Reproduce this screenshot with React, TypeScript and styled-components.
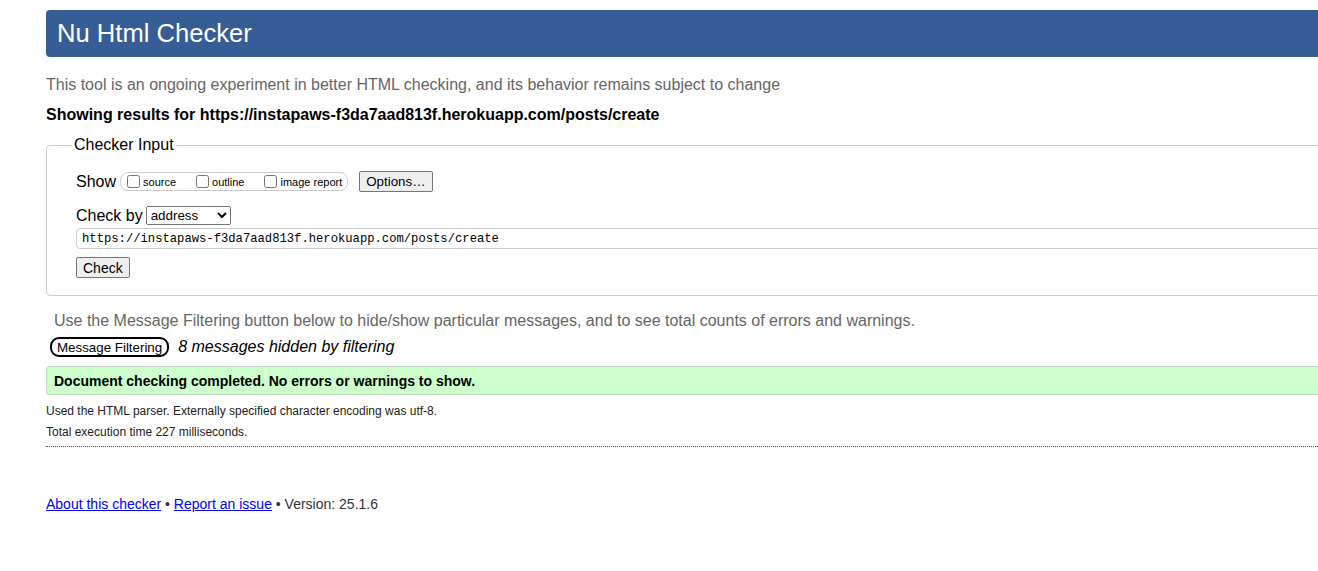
import React from 'react';
import styled, { createGlobalStyle } from 'styled-components';

const GlobalStyle = createGlobalStyle`
  html, body {
    margin: 0;
    padding: 0;
    background: #fff;
    overflow: hidden;
  }

  body {
    font-family: 'Liberation Sans', Arial, sans-serif;
    color: #000;
  }
`;

const Page = styled.div`
  width: 1500px;
  padding: 10px 0 0 46px;
  box-sizing: border-box;
  font-size: 16px;
  line-height: 18px;
`;

const Header = styled.h1`
  margin: 0;
  height: 47px;
  padding: 0 11px 2px;
  box-sizing: border-box;
  display: flex;
  align-items: center;
  background-color: #365d95;
  color: #fff;
  font-size: 25.6px;
  font-weight: normal;
  border-radius: 4px;
`;

const Intro = styled.p`
  margin: 19px 0 0;
  color: #666;
`;

const Results = styled.p`
  margin: 12px 0 0;
  font-weight: bold;
`;

const Fieldset = styled.fieldset`
  margin: 12px 0 0;
  padding: 17px 0 17px 29px;
  border: 1px solid #ccc;
  border-radius: 4px;
  min-width: 0;

  legend {
    margin-left: -4px;
    padding: 0 2px;
    font-size: 16px;
    line-height: 18px;
  }
`;

const Row = styled.div<{ $top?: number }>`
  display: flex;
  align-items: center;
  gap: 4px;
  height: 21px;
  margin-top: ${({ $top }) => $top ?? 0}px;
`;

const CheckGroup = styled.span`
  display: inline-flex;
  align-items: center;
  height: 17px;
  padding: 0 5px 0 4px;
  border: 1px solid #ccc;
  border-radius: 8px;
  margin-right: 7px;

  label {
    display: inline-flex;
    align-items: center;
    font-size: 11px;
    margin-right: 18px;

    &:last-child {
      margin-right: 0;
    }
  }

  input {
    width: 13px;
    height: 13px;
    margin: 0 3px 0 2px;
  }
`;

const NativeButton = styled.button<{ $size?: number }>`
  font-family: 'Liberation Sans', Arial, sans-serif;
  font-size: ${({ $size }) => $size ?? 13.33}px;
  height: 21px;
  padding: 0 6px;
  background: #efefef;
  color: #000;
  border: 1px solid #767676;
  border-radius: 2px;
`;

const Select = styled.select`
  font-family: 'Liberation Sans', Arial, sans-serif;
  font-size: 13.33px;
  width: 85px;
  height: 19px;
  margin-left: -1px;
`;

const UrlInput = styled.input`
  display: block;
  box-sizing: border-box;
  width: 100%;
  height: 21px;
  margin-top: 2px;
  padding: 0 5px;
  border: 1px solid #ccc;
  border-radius: 4px;
  font-family: 'Liberation Mono', Consolas, monospace;
  font-size: 12.2px;
  color: #000;
`;

const CheckButtonWrap = styled.div`
  margin-top: 8px;
`;

const FilterNote = styled.p`
  margin: 16px 0 0 8px;
  color: #666;
`;

const FilterRow = styled.div`
  display: flex;
  align-items: center;
  margin: 7px 0 0 4px;
  height: 20px;
  gap: 9px;

  em {
    font-style: italic;
  }
`;

const FilterButton = styled.button`
  font-family: 'Liberation Sans', Arial, sans-serif;
  font-size: 13.33px;
  height: 20px;
  padding: 0 5px;
  background: #fff;
  color: #000;
  border: 2px solid #000;
  border-radius: 9px;
`;

const Success = styled.div`
  margin-top: 9px;
  height: 29px;
  box-sizing: border-box;
  display: flex;
  align-items: center;
  padding-left: 7px;
  background-color: #ccffcc;
  border: 1px solid #c4d6c4;
  border-radius: 3px;
  font-size: 14px;
  font-weight: bold;
`;

const Small = styled.p<{ $top: number }>`
  margin: ${({ $top }) => $top}px 0 0;
  font-size: 12px;
  line-height: 14px;
  color: #222;
`;

const Divider = styled.hr`
  margin: 7px 0 0;
  border: 0;
  border-top: 1px dotted #555;
  height: 0;
`;

const Footer = styled.p`
  margin: 49px 0 0;
  font-size: 14px;
  line-height: 16px;
  color: #333;

  a {
    color: #0000ee;
    text-decoration: underline;
  }
`;

function App() {
  return (
    <Page>
      <GlobalStyle />
      <Header>Nu Html Checker</Header>
      <Intro>
        This tool is an ongoing experiment in better HTML checking, and its
        behavior remains subject to change
      </Intro>
      <Results>
        Showing results for https://instapaws-f3da7aad813f.herokuapp.com/posts/create
      </Results>

      <Fieldset>
        <legend>Checker Input</legend>
        <Row>
          <span>Show</span>
          <CheckGroup>
            <label>
              <input type="checkbox" readOnly />
              source
            </label>
            <label>
              <input type="checkbox" readOnly />
              outline
            </label>
            <label>
              <input type="checkbox" readOnly />
              image report
            </label>
          </CheckGroup>
          <NativeButton>Options…</NativeButton>
        </Row>
        <Row $top={13}>
          <span>Check by</span>
          <Select defaultValue="address">
            <option value="address">address</option>
            <option value="file">file upload</option>
            <option value="text">text input</option>
          </Select>
        </Row>
        <UrlInput
          readOnly
          value="https://instapaws-f3da7aad813f.herokuapp.com/posts/create"
        />
        <CheckButtonWrap>
          <NativeButton $size={14}>Check</NativeButton>
        </CheckButtonWrap>
      </Fieldset>

      <FilterNote>
        Use the Message Filtering button below to hide/show particular messages,
        and to see total counts of errors and warnings.
      </FilterNote>
      <FilterRow>
        <FilterButton>Message Filtering</FilterButton>
        <em>8 messages hidden by filtering</em>
      </FilterRow>

      <Success>Document checking completed. No errors or warnings to show.</Success>

      <Small $top={9}>
        Used the HTML parser. Externally specified character encoding was utf-8.
      </Small>
      <Small $top={7}>Total execution time 227 milliseconds.</Small>
      <Divider />

      <Footer>
        <a href="#about">About this checker</a> • <a href="#issue">Report an issue</a> •
        Version: 25.1.6
      </Footer>
    </Page>
  );
}

export default App;
